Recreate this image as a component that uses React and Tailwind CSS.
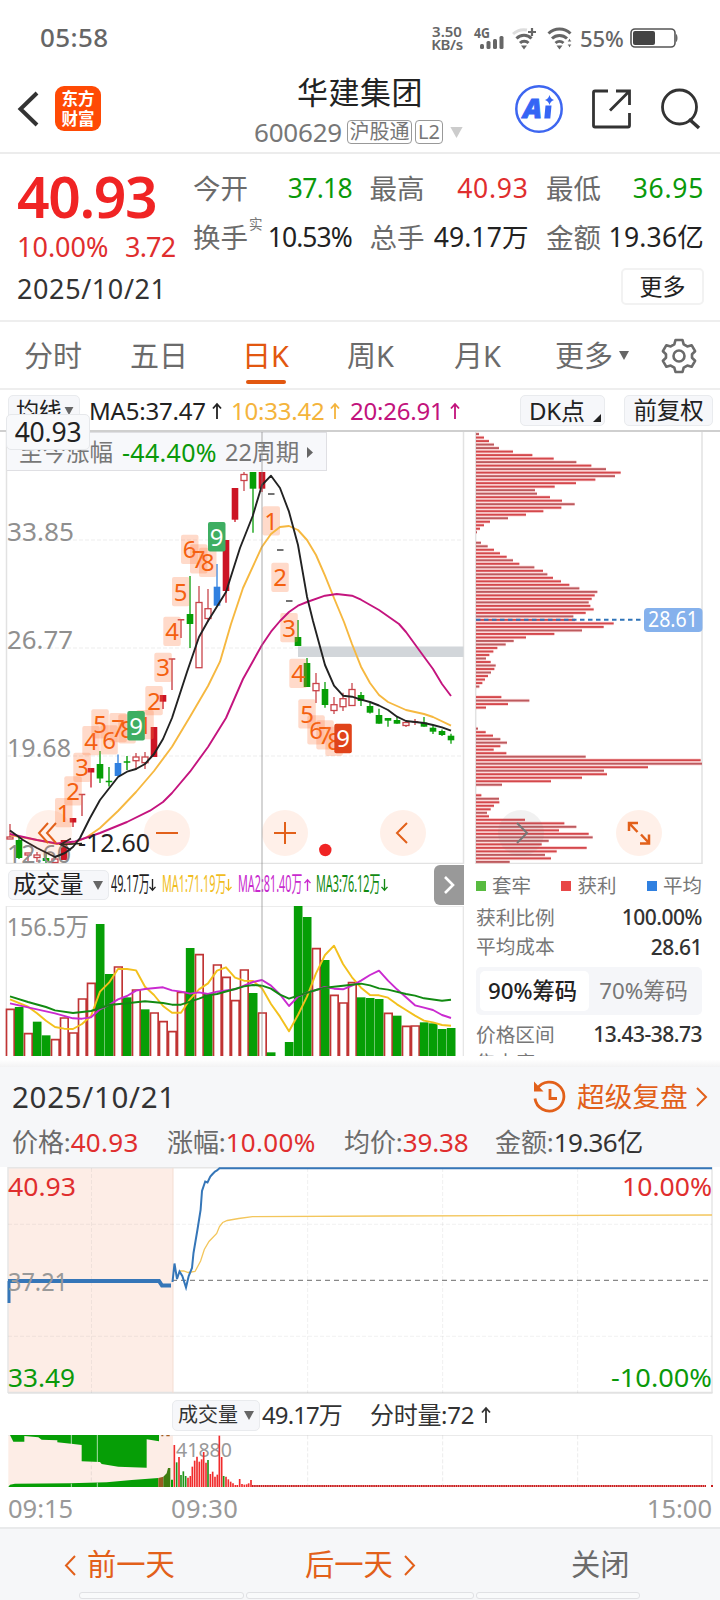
import React from "react";

const FONT = "font-['Noto_Sans','Noto_Sans_CJK_SC',sans-serif]";

/* kind, bodyTop, bodyBottom, wickTop, wickBottom */
const CANDLES = [
  ["h", 837, 839, 824, 838], ["g", 840, 858, 837, 859], ["h", 853, 855, 853, 861], ["h", 855, 857.5, 852, 862],
  ["g", 858, 861, 854, 863], ["h", 859, 862.5, 857, 863], ["r", 840, 860, 840, 860], ["r", 818, 822.5, 818, 827],
  ["t", 794.5, 794.5, 794.5, 816], ["r", 768, 772.5, 768, 787.5], ["g", 764, 778.5, 751, 783], ["c", 781.5, 781.5, 767, 786.5],
  ["b", 763, 776, 754.5, 776], ["c", 762, 762, 756, 770], ["h", 757, 760.7, 753, 770], ["h", 757, 762.7, 752, 769],
  ["r", 727, 757, 727, 757], ["r", 695, 701.7, 695, 709], ["t", 659, 659, 659, 690], ["t", 619.7, 619.7, 619.7, 638],
  ["g", 614, 624, 576, 648], ["h", 602.5, 667.7, 586, 667.7], ["h", 608.7, 618.5, 589, 622], ["b", 586.7, 605.7, 564, 605.7],
  ["r", 540, 591, 540, 602.7], ["r", 488, 519.7, 488, 522], ["h", 474.5, 480.5, 472, 491], ["g", 472, 488.7, 472, 532.7],
  ["r", 472, 488.7, 472, 492], ["d", 494, 494, 494, 494], ["d", 550, 550, 550, 550], ["d", 601, 601, 601, 601],
  ["g", 637, 646, 620, 646], ["g", 663, 687, 658, 687], ["h", 683.5, 690.7, 673, 703], ["g", 689, 705, 682, 707.7],
  ["h", 704.7, 710.5, 697, 714], ["h", 698.7, 706.7, 692.7, 711], ["h", 689.5, 705.5, 683, 705.5], ["g", 695, 701, 692, 706],
  ["g", 706, 712.7, 703, 713.5], ["g", 715, 723.7, 708.7, 723.7], ["g", 718, 720.7, 718, 726.7], ["g", 720, 723.7, 716, 723.7],
  ["h", 722.5, 725.5, 720, 727], ["t", 721.7, 721.7, 719, 725], ["g", 722.5, 726.7, 717, 726.7], ["g", 727.7, 731.7, 725.7, 734],
  ["g", 731, 735, 729.5, 736], ["g", 735.7, 740.3, 733.7, 743.7],
];

const MA5 = "10,830.5 23,840 37,848 55,857 65,853 73,847 80,838 90,818 100,800 118,777 127,771.7 136,769 145,764 154,754 163,739 172,718 187,672 199,637 208,621 226,592 240,548 252.7,516 262,485 271,475.7 280,488 289,511.7 298,545 307,596.7 313,621 325,665 334,685.7 343,695.7 352,696.7 361,699.7 370,702 379,705.5 388,710 397,716.7 406,721 424,723 433,725 442,727.3 451,730.7";
const MA10 = "10,835 37,840 57,844 72,844 87,837 100,828 118,811 136,792 154,771 172,746.7 190,716.7 208,686 220,661.7 231,624 243,588 262,546.7 271,534 280,527 289,526 298,530 307,540 316,555 325,575.7 334,598 344,622 352,644 361,666.7 370,683 379,695 388,702 406,710 424,714 433,717 451,725.7";
const MA20 = "10,834 37,840 57,843.5 75,841.5 100,833 127,822 150,810.7 163,802 172,793 190,771.7 208,747 226,718 243,679 262,645 271,631.7 280,621 289,612 298,605.7 307,602 325,595.7 336.7,594 352,595.7 361,599.7 379,610 399,624 406,632 424,656.7 433,669 442,684 451,696";

const BADGES = [
  ["1", 55, 798], ["2", 64.3, 776.3], ["3", 73.3, 752.7], ["4", 82.3, 726], ["5", 91.3, 709.3], ["6", 100.3, 725.3],
  ["7", 109.3, 713], ["8", 118.3, 714.3], ["1", 136.3, 710], ["2", 145.3, 686], ["3", 154.3, 652.7], ["4", 163.3, 616.7],
  ["5", 172, 577], ["6", 181, 534.7], ["7", 190, 544.3], ["8", 199, 547.7], ["1", 262.5, 506.3], ["2", 271.3, 562.7],
  ["3", 280.3, 613], ["4", 289.3, 658.7], ["5", 298.3, 699.3], ["6", 307.3, 715.3], ["7", 316.3, 720.3], ["8", 325.3, 726.7],
];
const NINES = [[127.3, 711, "#3eae62"], [208, 522, "#3eae62"], [334.3, 723.7, "#e0431a"]];

const CHIPS = [
  42, 57, 72, 87, 102, 144, 202, 266, 334, 379, 423, 467, 450, 391, 333, 269, 210, 216, 255, 291, 329, 289, 235, 183, 129, 75, 57, 45, 36,
  0, 0, 48, 68, 87, 105, 125, 144, 163, 208, 234, 247, 264, 288, 313, 343, 397, 389, 380, 371, 376, 386, 362, 325, 330, 446, 416, 351, 268,
  183, 146, 122, 97, 85, 73, 63, 77, 92, 88, 78, 69, 60, 52, 43, 0, 0, 109, 193, 129, 63, 0, 0, 0, 0, 0, 39, 62, 84, 106, 126, 106, 86, 124,
  362, 707, 711, 549, 417, 426, 351, 258, 111, 0, 0, 49, 102, 103, 87, 77, 66, 72, 180, 298, 334, 282, 371, 383, 251, 230, 365, 275, 240, 258, 134,
];

/* h = hollow red, g = solid green; the number is the top edge on a 3x grid */
const VOLS = "h446 g441 h519 g485 g526 h537 h472 h517 h415 h368 g192 g342 h319 g412 h388 g448 h457 h483 h513 h395 g264 h282 g400 h313 h350 h420 h328 g399 h457 g577 n587 g546 g138 g171 h264 g300 h404 h427 h366 g412 g414 g417 h458 g467 h497 h496 g487 g490 g507 g504".split(" ");
const VMA1 = "30,418 84,440 111,460 138,482 165,501 192,506 219,507 246,492 273,468 300,395 327,368 354,327 381,327 408,331 435,380 462,405 489,438 516,458 543,458 570,418 597,388 624,370 651,332 678,322 705,353 732,362 759,363 786,385 813,432 840,470 867,514 894,465 921,410 948,340 975,285 1002,257 1029,312 1056,352 1083,383 1110,405 1137,406 1164,413 1191,433 1218,450 1245,467 1272,482 1299,487 1326,495 1353,497";
const VMA2 = "30,430 84,442 165,460 219,475 246,476 273,472 300,448 327,435 354,418 381,408 408,392 435,387 489,382 516,391 543,395 570,401 597,397 624,402 651,395 705,388 732,377 759,366 786,360 813,377 840,403 867,438 894,410 921,398 948,390 975,381 1002,386 1029,388 1056,377 1083,362 1110,345 1137,332 1164,362 1191,388 1218,412 1245,436 1272,443 1299,450 1326,465 1353,474";
const VMA3 = "30,409 84,426 138,441 165,451 219,459 273,453 300,444 327,435 381,430 435,424 489,429 516,434 543,434 597,416 624,406 651,402 705,387 732,379 759,375 786,377 813,386 840,404 867,416 894,407 948,390 975,383 1029,377 1083,371 1110,376 1137,385 1164,389 1218,402 1245,407 1272,415 1326,422 1353,419";

const TICKS = "523r195 530g247 537r231 543g285 550g274 557g288 564r293 571r288 577r260 584r242 591r230 598r245 605r238 611r216 618r248 624g240 631r282 638r275 645r290 652r284 658r167 665r231 671g288 678r290 685r298 692r305 699r310 706r315 712r315 719r297 726r312 733r314 740r313 746r310 753r300".split(" ").map((s) => s.match(/(\d+)([rg])(\d+)/));

function Label({ x, y, w, size = 26, fill = "#8f8f8f", children }) {
  return (
    <text x={x} y={y} fontSize={size} fill={fill} textLength={w} lengthAdjust="spacingAndGlyphs">{children}</text>
  );
}

function Tri({ className }) {
  return <svg className={className} viewBox="0 0 10 9"><path d="M0 0h10L5 9z" fill="currentColor" /></svg>;
}

function StatusBar() {
  return (
    <div className="flex h-[76px] items-center text-[#666]">
      <span className="ml-10 mt-[-3px] w-[391px] text-[26px] font-medium tracking-[0.4px] leading-none">05:58</span>
      <div className="flex w-[32px] flex-col items-center text-[15px] font-semibold leading-[13px]">
        <span>3.50</span><span className="tracking-[-0.4px]">KB/s</span>
      </div>
      <svg className="ml-[11px] h-[24px] w-[32px] overflow-visible" viewBox="0 0 32 24">
        <text x="0" y="12" fontSize="14" fontWeight="700" fill="#666" textLength="16" lengthAdjust="spacingAndGlyphs">4G</text>
        <g fill="#666"><rect x="6" y="18" width="4" height="5" rx="1.5" /><rect x="12.5" y="15" width="4" height="8" rx="1.5" /><rect x="19" y="13" width="4" height="10" rx="1.5" /><rect x="25.5" y="10" width="4" height="13" rx="1.5" /></g>
      </svg>
      <svg className="ml-[6px] h-[24px] w-[26px]" viewBox="0 0 26 24" fill="none" stroke="#666" strokeWidth="3">
        <path d="M1 8a16 16 0 0 1 14-4" stroke="#ddd" /><path d="M4.500 12.500a10.500 10.500 0 0 1 15 0M8 17a6 6 0 0 1 8.500 0" /><path d="M9 19.500h6l-3 4z" fill="#666" stroke="none" /><path d="M16 6h8M20 2v8" strokeWidth="2.200" />
      </svg>
      <svg className="ml-[9px] h-[24px] w-[26px]" viewBox="0 0 26 24" fill="none" stroke="#666" strokeWidth="3">
        <path d="M1.500 7.500a16 16 0 0 1 22 0M5 12.500a11 11 0 0 1 15 0M8.500 17a6 6 0 0 1 8 0" /><path d="M9.500 19.500h6l-3 4z" fill="#666" stroke="none" /><path d="M20 16l2.500-4 2.500 4zM20 18l2.500 4 2.500-4z" fill="#666" stroke="#fff" strokeWidth="1" />
      </svg>
      <span className="ml-[7px] w-[50px] text-[22px] font-medium leading-none tracking-[-0.1px]">55%</span>
      <svg className="h-[20px] w-[48px]" viewBox="0 0 48 20">
        <rect x="1" y="1" width="44" height="18" rx="4" fill="#fff" stroke="#555" strokeWidth="1.600" /><rect x="3" y="3" width="22" height="14" rx="2" fill="#444" /><path d="M46 6c2 1 2 7 0 8z" fill="#666" />
      </svg>
    </div>
  );
}

function Header() {
  return (
    <header className="flex h-[78px] border-b-2 border-[#ececec]">
      <svg className="ml-[17px] mt-[15px] h-[36px] w-[23px]" viewBox="0 0 23 36"><path d="M20 2L3.500 18 20 34" fill="none" stroke="#333" strokeWidth="4" /></svg>
      <div className="ml-[15px] mt-[10px] flex h-[45px] w-[46px] flex-col items-center justify-center rounded-[9px] bg-[#ff4a05] text-[16.5px] font-bold leading-[19.5px] text-white">
        <span>东方</span><span>财富</span>
      </div>
      <div className="ml-[110px] flex w-[298px] flex-col items-center">
        <h1 className="mt-0 text-[31px] leading-[32px] tracking-[0.5px] text-[#222]">华建集团</h1>
        <div className="mt-[11px] flex h-[26px] w-full items-center pl-[43px] text-[#777]">
          <span className="w-[93px] text-[26px] leading-none tracking-[-0.2px]">600629</span>
          <span className="flex h-[24px] w-[65px] items-center justify-center rounded-[4px] border border-[#999] text-[20px] leading-none">沪股通</span>
          <span className="ml-[3px] flex h-[24px] w-[28px] items-center justify-center rounded-[4px] border border-[#999] text-[20px] leading-none">L2</span>
          <Tri className="ml-[6px] h-[11px] w-[15px] text-[#ccc]" />
        </div>
      </div>
      <svg className="ml-[5px] mr-px mt-[8px] h-[50px] w-[50px]" viewBox="0 0 50 50">
        <circle cx="25" cy="25" r="22.700" fill="none" stroke="#3d66f0" strokeWidth="2.500" />
        <text x="9" y="34" fontSize="26" fontWeight="900" fontStyle="italic" fill="#3565f5" stroke="#3565f5" strokeWidth=".8" textLength="19" lengthAdjust="spacingAndGlyphs">A</text>
        <path d="M31.500 21.500h6l-1.200 13h-6z" fill="#3565f5" /><path d="M35.500 11q1 4 4.500 5-3.500 1-4.500 5-1-4-4.500-5 3.500-1 4.500-5" fill="#3565f5" />
      </svg>
      <svg className="ml-[27px] mt-[13px] h-[40px] w-[40px]" viewBox="0 0 40 40" fill="none" stroke="#333" strokeWidth="2.800"><path d="M16 2H3q-1.500 0-1.500 1.500v33Q1.500 38 3 38h33q1.500 0 1.500-1.500V24M24 2h13.500v14M37 2.500L18 21.500" /></svg>
      <svg className="ml-[28px] mt-[12px] h-[42px] w-[42px]" viewBox="0 0 42 42" fill="none" stroke="#333" strokeWidth="2.800"><circle cx="19.500" cy="19" r="17" /><path d="M29 31l10 9" strokeWidth="3.500" /></svg>
    </header>
  );
}

function Stat({ label, value, color, sup }) {
  return (
    <div className="relative flex h-[49px] items-center justify-between">
      <span className="text-[27.5px] leading-none text-[#6b6b6b]">{label}</span>
      {sup && <span className="absolute left-[56px] top-[5px] text-[13.5px] leading-none text-[#777]">{sup}</span>}
      <span className={`text-[26.5px] leading-none ${color}`}>{value}</span>
    </div>
  );
}

function Quote() {
  return (
    <section className="h-[168px] border-b-2 border-[#eeeeee] pl-[17px] pr-[16px]">
      <div className="flex h-[112px]">
        <div className="w-[176px] shrink-0">
          <div className="mt-[14px] text-[57px] font-semibold leading-[56px] tracking-[-1.4px] text-[#f02424]">40.93</div>
          <div className="mt-[8px] flex text-[27px] leading-[30px] text-[#e02e2e]"><span className="w-[108px]">10.00%</span><span className="tracking-[-0.8px]">3.72</span></div>
        </div>
        <div className="mt-[10px] grid w-[511px] shrink-0 grid-cols-[159px_159px_158px] content-start justify-between">
          <Stat label="今开" value="37.18" color="text-[#0a990a] tracking-[-0.7px]" />
          <Stat label="最高" value="40.93" color="text-[#e02e2e] tracking-[0.7px]" />
          <Stat label="最低" value="36.95" color="text-[#0a990a] tracking-[0.7px]" />
          <Stat label="换手" value="10.53%" color="text-[#222] tracking-[-0.9px]" sup="实" />
          <Stat label="总手" value="49.17万" color="text-[#222] tracking-[0.1px]" />
          <Stat label="金额" value="19.36亿" color="text-[#222] tracking-[0.2px]" />
        </div>
      </div>
      <div className="flex h-[44px] items-center justify-between">
        <span className="text-[27px] leading-none tracking-[0.6px] text-[#333]">2025/10/21</span>
        <button className="mt-[-4px] h-[37px] w-[83px] rounded-[5px] border-2 border-[#f2f2f2] text-[23px] leading-none text-[#222]">更多</button>
      </div>
    </section>
  );
}

function Tabs() {
  const tab = "flex h-full items-center shrink-0 whitespace-nowrap";
  return (
    <nav className="flex h-[68px] items-center border-b-2 border-[#eeeeee] pl-[24px] pt-px text-[29px] leading-none text-[#6b6b6b]">
      <span className={`${tab} w-[106px]`}>分时</span>
      <span className={`${tab} w-[112px]`}>五日</span>
      <span className={`${tab} relative w-[105px] text-[#e2570f]`}>日K<i className="absolute bottom-[4px] left-[4px] h-[4px] w-[40px] rounded-full bg-[#e2570f]" /></span>
      <span className={`${tab} w-[107px]`}>周K</span>
      <span className={`${tab} w-[101px]`}>月K</span>
      <span className={`${tab} w-[64px]`}>更多</span>
      <Tri className="h-[9px] w-[10px] text-[#666]" />
      <svg className="ml-[32px] h-[36px] w-[36px]" viewBox="0 0 36 36" fill="none" stroke="#6b6b6b" strokeWidth="2.600" strokeLinejoin="round">
        <path d="M14.500 2h7l1.200 4.300 3.600 2.100 4.300-1.200 3.500 6-3.100 3v3.600l3.100 3-3.500 6-4.300-1.200-3.600 2.100L21.500 34h-7l-1.200-4.300-3.600-2.100-4.300 1.200-3.500-6 3.100-3v-3.600l-3.100-3 3.500-6 4.300 1.200 3.600-2.100z" /><circle cx="18" cy="18" r="5.500" />
      </svg>
    </nav>
  );
}

function Toolbar() {
  const btn = "flex shrink-0 items-center rounded-[5px] border border-[#e9ebee] bg-[#f6f7fa] leading-none text-[#222]";
  return (
    <div className="relative flex h-[42px] items-center border-b-2 border-[#cfcfcf] pl-[8px] pt-px text-[24px] leading-none tracking-[-0.2px]">
      <div className={`${btn} h-[31px] w-[72px] pl-[7px]`}><span className="w-[48px] text-[23px]">均线</span><Tri className="h-[8px] w-[10px] text-[#666]" /></div>
      <span className="ml-[9px] w-[122px] shrink-0 text-[#222]">MA5:37.47</span>
      <Arrow className="w-[12px] text-[#222]" />
      <span className="ml-[8px] w-[98px] shrink-0 text-[#f4b43c]">10:33.42</span>
      <Arrow className="w-[12px] text-[#f4b43c]" />
      <span className="ml-[9px] w-[99px] shrink-0 text-[#c2127c]">20:26.91</span>
      <Arrow className="w-[12px] text-[#c2127c]" />
      <div className={`${btn} relative ml-[59px] h-[31px] w-[85px] pl-[8px] text-[24px]`}>DK点<svg className="absolute bottom-[3px] right-[3px] h-[8px] w-[8px]" viewBox="0 0 8 8"><path d="M8 0v8H0z" fill="#222" /></svg></div>
      <div className={`${btn} ml-[19px] h-[31px] w-[89px] justify-center text-[23.5px]`}>前复权</div>
      <div className="absolute left-[6px] top-[24px] z-20 flex h-[36px] w-[84px] items-center justify-center rounded-[5px] border border-[#e6e8eb] bg-[#f8f9fb] text-[26.5px] leading-none text-[#222]">40.93</div>
    </div>
  );
}

function Arrow({ className, down }) {
  return (
    <svg className={`h-[18px] shrink-0 ${className}`} viewBox="0 0 12 18"><path d={down ? "M6 1v15M2 11.500L6 16l4-4.500" : "M6 17V2M2 6.500L6 2l4 4.500"} fill="none" stroke="currentColor" strokeWidth="1.800" /></svg>
  );
}

function Candle({ d, i }) {
  const [k, t, b, wt, wb] = d;
  const x = 10 + 9 * i;
  const c = { h: "#c9444a", r: "#cc1424", g: "#069e06", b: "#3080e0", t: "#c9444a", c: "#069e06", d: "#444" }[k];
  if (k === "d") return <path d={`M${x - 3} ${t}h6.500`} stroke={c} strokeWidth="1.500" />;
  if (k === "t" || k === "c") return <path d={`M${x - 3.3} ${t}h6.600M${x} ${wt}V${wb}`} stroke={c} strokeWidth="1.400" />;
  return (
    <g>
      <path d={`M${x} ${wt}V${wb}`} stroke={c} strokeWidth="1.600" opacity=".8" />
      <rect x={x - (k === "h" ? 3 : 3.3)} y={t} width={k === "h" ? 6 : 6.6} height={b - t} fill={k === "h" ? "#fff" : c} stroke={k === "h" ? c : "none"} strokeWidth="1.300" />
    </g>
  );
}

function KLine() {
  return (
    <svg className="block h-[432px] w-[470px]" viewBox="0 432 470 432">
      <path d="M6.500 432V863.500H463.500V432" fill="none" stroke="#e2e2e2" strokeWidth="1.500" />
      {[540, 648, 756].map((y) => <path key={y} d={`M7 ${y}H463`} stroke="#f3f3f3" strokeWidth="1.500" strokeDasharray="4 2" />)}
      <rect x="298" y="646.500" width="165.500" height="10.500" fill="#d2d6da" />
      <Label x={7} y={540.5} w={67}>33.85</Label>
      <Label x={7} y={648.7} w={66}>26.77</Label>
      <Label x={7} y={756.5} w={64}>19.68</Label>
      {CANDLES.map((d, i) => <Candle key={i} d={d} i={i} />)}
      <Label x={7} y={862.5} w={64}>12.60</Label>
      {BADGES.map(([n, x, y], i) => (
        <g key={i}>
          <rect x={x} y={y} width="17.500" height="29.300" rx="2" fill="#ff7a40" fillOpacity=".28" />
          <text x={x + 8.7} y={y + 23.5} fontSize="24" textAnchor="middle" fill="#f4600f">{n}</text>
        </g>
      ))}
      <g fill="none" strokeWidth="1.900" strokeLinejoin="round">
        <polyline points={MA10} stroke="#f6b840" /><polyline points={MA20} stroke="#c4147e" /><polyline points={MA5} stroke="#222" />
      </g>
      {NINES.map(([x, y, c], i) => (
        <g key={i}>
          <rect x={x} y={y} width="17.500" height="29.500" rx="2" fill={c} />
          <text x={x + 8.7} y={y + 23.5} fontSize="24" textAnchor="middle" fill="#fff">9</text>
        </g>
      ))}
      <path d="M82 843.500L60.500 844.500M71 838.500L60.500 844.500 71 850" fill="none" stroke="#222" strokeWidth="1.600" />
      <Label x={78} y={852.3} w={72} fill="#222">-12.60</Label>
      <circle cx="325.300" cy="850" r="6.200" fill="#f02424" />
    </svg>
  );
}

function Round({ className, gray, children }) {
  return (
    <button className={`absolute top-[378px] flex h-[46px] w-[46px] items-center justify-center rounded-full ${gray ? "bg-[#777]/10 text-[#777]" : "bg-[#ff6a20]/10 text-[#e2601a]"} ${className}`}>
      <svg className="h-[24px] w-[24px]" viewBox="0 0 24 24" fill="none" stroke="currentColor" strokeWidth="2">{children}</svg>
    </button>
  );
}

function VolText({ w, color, down, children }) {
  return (
    <span className={`flex shrink-0 items-center ${w} ${color}`}>
      <span className="min-w-0 flex-1"><span className="inline-block w-0 origin-left scale-x-[0.47] whitespace-nowrap text-[23px] leading-none">{children}</span></span>
      <Arrow down={down} className="w-[9px]" />
    </span>
  );
}

function Volume() {
  return (
    <svg className="block h-[150px] w-[470px]" viewBox="0 138 1410 450">
      <path d="M19 588V138.500H1390V588" fill="none" stroke="#e6e6e6" strokeWidth="4" />
      <text x="20" y="227" fontSize="78" fill="#8f8f8f" textLength="247" lengthAdjust="spacingAndGlyphs">156.5万</text>
      {VOLS.map((v, i) => {
        const x = 30.5 + 27 * i, y = Number(v.slice(1));
        if (v[0] === "g") return <rect key={i} x={x - 13} y={y} width="26" height={588 - y} fill="#069e06" />;
        if (v[0] === "h") return <path key={i} d={`M${x - 11} 588V${y + 2}H${x + 12}V588`} fill="#fff" stroke="#c03434" strokeWidth="5" />;
        return null;
      })}
      <g fill="none" strokeWidth="5.800" strokeLinejoin="round">
        <polyline points={VMA1} stroke="#f3c01c" /><polyline points={VMA2} stroke="#ca2ad0" /><polyline points={VMA3} stroke="#128a12" />
      </g>
    </svg>
  );
}

function Chips() {
  return (
    <svg className="block h-[432px] w-[240px]" viewBox="470 432 240 432">
      <path d="M475.700 432V863.500H702V432" fill="none" stroke="#e2e2e2" strokeWidth="1.500" />
      {CHIPS.map((e, i) => e > 0 && (
        <g key={i}>
          <rect x="476" y={432.3 + i * 3.507} width={(e - 33) / 3} height="3.500" fill="#f7b8ba" opacity=".55" />
          <rect x="476" y={433.1 + i * 3.507} width={(e - 33) / 3} height="1.900" fill={i % 4 === 0 || i % 7 === 3 ? "#bd5a5e" : "#d4484c"} />
        </g>
      ))}
      <path d="M476 619.800H645" stroke="#2f73b8" strokeWidth="2" strokeDasharray="4.500 3.500" />
      <rect x="644" y="608" width="58.500" height="24" rx="4" fill="#85b1ec" />
      <Label x={648} y={627} w={50} size={21} fill="#fff">28.61</Label>
    </svg>
  );
}

function ChipRow({ label, value, className = "h-[29.5px]" }) {
  return (
    <div className={`flex items-center justify-between leading-none ${className}`}>
      <span className="text-[19.7px] text-[#777]">{label}</span>
      <span className="text-[21px] font-medium tracking-[-0.5px] text-[#333]">{value}</span>
    </div>
  );
}

function Charts() {
  return (
    <section className="relative flex h-[624px] overflow-hidden">
      <div className="relative w-[470px] shrink-0">
        <KLine />
        <div className="absolute left-[7px] top-0 flex h-[39px] w-[320px] items-center border border-l-0 border-[#dfdfe3] bg-[#f7f8fb] pl-[12px] pt-[2px] text-[23.5px] leading-none text-[#777]">
          <span className="w-[103px]">至今涨幅</span>
          <span className="w-[103px] text-[25px] tracking-[0.3px] text-[#0a990a]">-44.40%</span>
          <span className="w-[82px] tracking-[0.1px]">22周期</span>
          <svg className="h-[11px] w-[7px]" viewBox="0 0 7 11"><path d="M0 0v11l6-5.500z" fill="#666" /></svg>
        </div>
        <Round className="left-[26px]"><path d="M11 2L2 12l9 10M19 2l-9 10 9 10" /></Round>
        <Round className="left-[144px]"><path d="M1 12h22" /></Round>
        <Round className="left-[262px]"><path d="M1 12h22M12 1v22" /></Round>
        <Round className="left-[380px]"><path d="M16 2L6 12l10 10" /></Round>
        <div className="flex h-[42px] items-center pl-[8px]">
          <div className="flex h-[30px] w-[101px] shrink-0 items-center rounded-[5px] border border-[#e9ebee] bg-[#f6f7fa] pl-[4px] text-[23.5px] leading-none text-[#222]"><span className="w-[80px]">成交量</span><Tri className="h-[9px] w-[10px] text-[#666]" /></div>
          <VolText w="ml-[2px] w-[46px]" color="text-[#222]" down>49.17万</VolText>
          <VolText w="ml-[5px] w-[71px]" color="text-[#f1bd20]" down>MA1:71.19万</VolText>
          <VolText w="ml-[5px] w-[74px]" color="text-[#c82ace]">MA2:81.40万</VolText>
          <VolText w="ml-[4px] w-[73px]" color="text-[#128a12]" down>MA3:76.12万</VolText>
          <button className="ml-[45px] flex h-[40px] w-[30px] shrink-0 items-center justify-center rounded-l-[6px] bg-[#999]"><svg className="h-[18px] w-[12px]" viewBox="0 0 12 18"><path d="M2 1l8 8-8 8" fill="none" stroke="#fff" strokeWidth="2.600" /></svg></button>
        </div>
        <Volume />
        <i className="absolute left-[261px] top-0 h-full w-[2px] bg-[#888]/35" />
      </div>
      <div className="relative w-[240px] shrink-0">
        <Chips />
        <Round gray className="left-[28px]"><path d="M8 2l10 10L8 22" /></Round>
        <Round className="left-[146px]"><path d="M2 10V2h9M2 2l8.500 9M22 13.500v9h-9M22 22l-8-8.500" strokeWidth="2.500" /></Round>
        <div className="pl-[6px] pr-[8px]">
          <div className="flex h-[39px] items-center justify-between pt-[4px] text-[19.5px] leading-none text-[#777]">
            <span className="flex items-center gap-[6px]"><i className="h-[10px] w-[10px] bg-[#58bb40]" />套牢</span>
            <span className="flex items-center gap-[6px]"><i className="h-[10px] w-[10px] bg-[#e84848]" />获利</span>
            <span className="flex items-center gap-[6px]"><i className="h-[10px] w-[10px] bg-[#3080e0]" />平均</span>
          </div>
          <ChipRow label="获利比例" value="100.00%" />
          <ChipRow label="平均成本" value="28.61" />
          <div className="mt-[5px] flex h-[48px] rounded-[5px] bg-[#f5f6f9] p-[4px] text-[22.3px] leading-none">
            <span className="flex w-[109px] items-center justify-center rounded-[5px] bg-white pr-[4px] font-medium text-[#222]">90%筹码</span>
            <span className="flex flex-1 items-center justify-center text-[#777]">70%筹码</span>
          </div>
          <ChipRow label="价格区间" value="13.43-38.73" className="mt-[5px] h-[29px]" />
          <ChipRow label="集中度" value="" className="mt-[4px] h-[20px]" />
        </div>
      </div>
    </section>
  );
}

function DayInfo() {
  return (
    <section>
      <div className="h-[11px] bg-gradient-to-b from-white from-30% to-[#f3f3f4]" />
      <div className="h-[100px] bg-[#f6f7f9] pl-[12px]">
        <div className="flex h-[60px] items-center">
          <span className="w-[520px] text-[29.5px] leading-none tracking-[0.7px] text-[#333]">2025/10/21</span>
          <svg className="h-[34px] w-[36px] shrink-0" viewBox="0 0 36 34" fill="none" stroke="#e2601a" strokeWidth="2.800"><path d="M5 9A14.500 14.500 0 1 1 3 18.500" /><path d="M2 1.500v10h9.500z" fill="#e2601a" stroke="none" /><path d="M18 9v9.500h7" /></svg>
          <span className="ml-[9px] w-[117px] shrink-0 text-[27.7px] leading-none text-[#e2601a]">超级复盘</span>
          <svg className="ml-[2px] h-[20px] w-[12px]" viewBox="0 0 12 20"><path d="M1 1l9 9-9 9" fill="none" stroke="#e2601a" strokeWidth="2" /></svg>
        </div>
        <div className="flex h-[30px] items-center text-[26px] leading-none tracking-[-0.1px] text-[#6b6b6b]">
          <span className="w-[155px]">价格:<b className="font-normal tracking-[0.3px] text-[#e02e2e]">40.93</b></span>
          <span className="w-[177px]">涨幅:<b className="font-normal tracking-[0.3px] text-[#e02e2e]">10.00%</b></span>
          <span className="w-[151px]">均价:<b className="font-normal text-[#e02e2e]">39.38</b></span>
          <span>金额:<b className="font-normal tracking-[-0.6px] text-[#333]">19.36亿</b></span>
        </div>
      </div>
    </section>
  );
}

function Intraday() {
  return (
    <svg className="block h-[227px] w-[720px]" viewBox="0 1167 720 227">
      <rect x="8" y="1167" width="165" height="226" fill="#fdede6" />
      <path d="M8 1393V1167.800H712V1393" fill="none" stroke="#e6e6e6" strokeWidth="1.500" /><path d="M8 1392.700H712.500" stroke="#e2e2e2" strokeWidth="2" /><path d="M173 1168V1393" stroke="#f3ddd3" />
      <path d="M91.500 1168V1393M307.600 1168V1393M442.600 1168V1393M577.600 1168V1393M8 1224.300H712M8 1336.300H712" stroke="#8a8a8a" strokeOpacity=".12" strokeDasharray="4 2" />
      <path d="M172 1280.300H712" stroke="#888" strokeWidth="1.300" strokeDasharray="5 4" />
      <polyline points="179.500,1271 183.700,1271 188.200,1272.500 195,1271.500 200.600,1261 204.300,1249.500 209,1241.500 216.700,1233.500 219.500,1226.500 222.700,1222.500 227.300,1220.500 238.700,1218.500 252.500,1216.700 390,1216 712,1215" fill="none" stroke="#f3c65c" strokeWidth="1.300" />
      <path d="M9 1303V1281" fill="none" stroke="#3576b8" strokeWidth="3" />
      <path d="M8 1281H159L162 1285.500H171" fill="none" stroke="#3576b8" strokeWidth="4" />
      <polyline points="172.500,1282 174.500,1263.500 177,1279 179.500,1271.500 182.300,1276 186,1287.500 188.700,1276 192,1268 193.500,1253 197.400,1230 200.600,1210 202,1191 205.200,1181.500 207.500,1182.500 210.300,1176.500 212.600,1174 215,1171.500 217,1170.500 219.500,1168.300 712,1168.300" fill="none" stroke="#3576b8" strokeWidth="2" />
      <Label x={8} y={1195.5} w={68} fill="#e02e2e">40.93</Label>
      <Label x={622} y={1195.5} w={90} fill="#e02e2e">10.00%</Label>
      <Label x={8} y={1291.3} w={60} fill="#999">37.21</Label>
      <Label x={8} y={1387} w={67} fill="#0a990a">33.49</Label>
      <Label x={611} y={1387} w={101} fill="#0a990a">-10.00%</Label>
    </svg>
  );
}

function IntradayVolume() {
  return (
    <svg className="block h-[53px] w-[720px]" viewBox="0 165 2160 159">
      <rect x="25" y="165" width="494" height="156" fill="#fdede6" />
      <path d="M25 166H2136V321" fill="none" stroke="#e6e6e6" strokeWidth="3" />
      <path d="M274 166V321M923 166V321M1328 166V321M1733 166V321" stroke="#8a8a8a" strokeOpacity=".16" strokeWidth="3" strokeDasharray="12 6" />
      <path d="M30 165L40 185H73V168L115 172 125 179 172 181V187L220 192 245 195V244L300 246 305 252 355 260 440 263V178L477 184V165z" fill="#069e06" />
      <path d="M25 321L30 314 45 311 210 310 320 307 395 300 475 294V321z" fill="#069e06" />
      <path d="M475 321V294L490 290V321z" fill="#9a5a22" /><path d="M490 321V290L500 280 504 264H511V321z" fill="#3f7d10" /><path d="M513 321V299H519V321z" fill="#069e06" />
      <path d="M214 165V192M214 311V321M292 165V246M292 308V321" stroke="#fff" strokeWidth="2.500" opacity=".8" />
      <path d="M484 167H490M499 167H509" stroke="#a65d20" strokeWidth="4" />
      <text x="528" y="231" fontSize="60" fill="#999" textLength="168" lengthAdjust="spacingAndGlyphs">41880</text>
      {TICKS.map(([, x, c, y]) => <path key={x} d={`M${x} 321V${y}`} stroke={c === "r" ? "#f02c2c" : "#1f9418"} strokeWidth="5" />)}
      <path d="M756 318H2118" stroke="#f2b0b0" strokeWidth="6" /><path d="M756 318H2118" stroke="#c81e1e" strokeWidth="6" strokeDasharray="4.500 2" />
      <path d="M2133 318h6" stroke="#c81e1e" strokeWidth="6" />
    </svg>
  );
}

function BottomBar() {
  return (
    <footer className="relative flex h-[73px] items-center overflow-hidden border-t-2 border-[#e9eaeb] bg-[#f6f7f9] pl-[64px] pt-px text-[29.3px] leading-none text-[#e2601a]">
      <svg className="h-[21px] w-[12px] shrink-0" viewBox="0 0 12 21"><path d="M11 1L2 10.500 11 20" fill="none" stroke="currentColor" strokeWidth="2" /></svg>
      <span className="ml-[11px] w-[218px]">前一天</span>
      <span className="w-[99px]">后一天</span>
      <svg className="h-[21px] w-[12px] shrink-0" viewBox="0 0 12 21"><path d="M1 1l9 9.500L1 20" fill="none" stroke="currentColor" strokeWidth="2" /></svg>
      <span className="ml-[155px] text-[#6b6b6b]">关闭</span>
      <div className="absolute bottom-[1px] left-[79px] flex gap-[2px]">
        <i className="h-[7px] w-[165px] rounded-[3px] border border-[#e0e1e4] bg-[#f9fafb]" /><i className="h-[7px] w-[228px] rounded-[3px] border border-[#e0e1e4] bg-[#f9fafb]" /><i className="h-[7px] w-[164px] rounded-[3px] border border-[#e0e1e4] bg-[#f9fafb]" />
      </div>
    </footer>
  );
}

export default function App() {
  return (
    <main className={`flex h-[1600px] w-[720px] flex-col overflow-hidden bg-white ${FONT}`}>
      <StatusBar />
      <Header />
      <Quote />
      <Tabs />
      <Toolbar />
      <Charts />
      <DayInfo />
      <Intraday />
      <div className="flex h-[41px] items-center pl-[172px] pt-px text-[24px] leading-none tracking-[-0.9px] text-[#333]">
        <div className="flex h-[31px] w-[88px] items-center rounded-[5px] border border-[#e9ebee] bg-[#f6f7fa] pl-[5px] text-[20px] tracking-normal"><span className="w-[66px]">成交量</span><Tri className="h-[9px] w-[10px] text-[#666]" /></div>
        <span className="ml-[2px] w-[108px]">49.17万</span>
        <span className="w-[110px] text-[24px] tracking-[-0.3px]">分时量:72</span>
        <Arrow className="w-[12px]" />
      </div>
      <IntradayVolume />
      <div className="flex h-[39px] items-center pl-[8px] pr-[8px] pt-[2px] text-[25.5px] leading-none text-[#999]">
        <span className="w-[163px]">09:15</span><span className="flex-1 tracking-[0.4px]">09:30</span><span>15:00</span>
      </div>
      <BottomBar />
    </main>
  );
}
